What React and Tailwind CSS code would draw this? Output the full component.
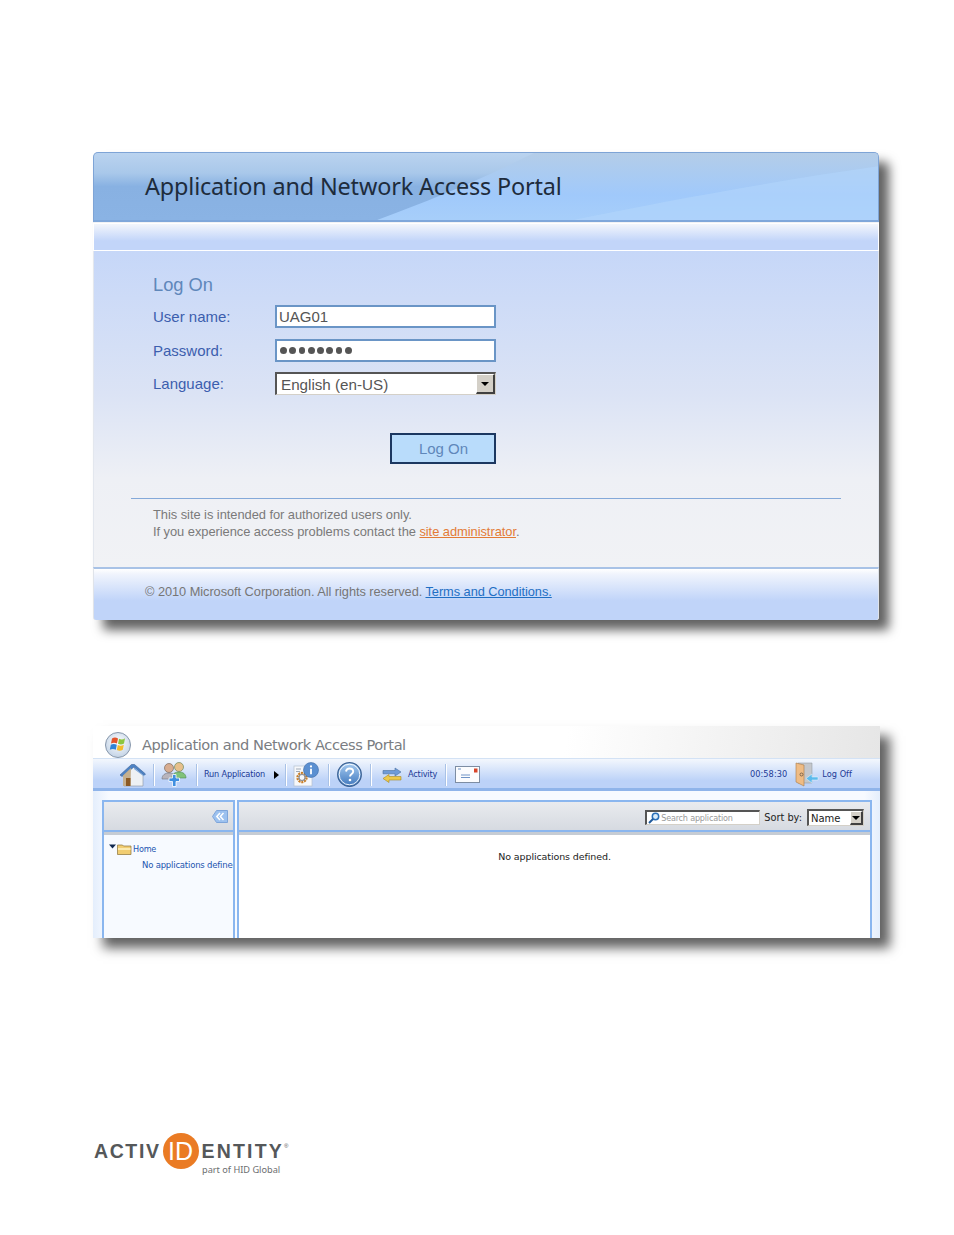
const Sep = ({ ml = "ml-0" }) => <div className={`h-[22px] w-px bg-[#a9c2e6] border-r border-white box-content ${ml}`} />;

const Orb = () => (
  <svg width="28" height="28" viewBox="0 0 28 28" className="shrink-0">
    <defs>
      <radialGradient id="orb" cx="50%" cy="40%" r="60%"><stop offset="0" stopColor="#ffffff" /><stop offset="1" stopColor="#c3d3e6" /></radialGradient>
    </defs>
    <circle cx="14" cy="14" r="12.5" fill="url(#orb)" stroke="#8797ab" />
    <path d="M8 7.500c2-1.200 4-1.200 6 0l-1 5c-2-1-4-1-6 0z" fill="#e2542b" />
    <path d="M15 7.700c2 1.100 4 1.100 6-.4l-1 5.200c-2 1.300-4 1.300-6 .2z" fill="#8cc63f" />
    <path d="M6.800 13.800c2-1 4-1 6 0l-1 5c-2-1-4-1-6 0z" fill="#2f83d6" />
    <path d="M13.800 14c2 1.100 4 1.100 6-.2l-1 5c-2 1.200-4 1.200-6 .1z" fill="#f3bb2b" />
  </svg>
);

const Home = () => (
  <svg width="27" height="24" viewBox="0 0 27 24" className="shrink-0">
    <path d="M5 11v12h19V11L14 3z" fill="#eef1f4" stroke="#8b95a3" strokeWidth=".6" />
    <path d="M1 12 12.500 1.500h3L26.500 11l-1.500 1.500-10-8.500L3 13.500z" fill="#4d82c4" stroke="#3a6296" strokeWidth=".6" />
    <path d="M4 12.500 12 5l-.5 18H4z" fill="#c5b08f" />
    <rect x="7" y="15" width="4.500" height="8" fill="#8c5a24" />
    <path d="M15 4.500 25 12.500v1L15 6z" fill="#7aa6dc" />
  </svg>
);

const Users = () => (
  <svg width="26" height="25" viewBox="0 0 26 25" className="shrink-0">
    <circle cx="8" cy="6" r="4.500" fill="#d8ad91" stroke="#7b6a5f" strokeWidth=".7" />
    <path d="M1 17c0-4 3-6 7-6s7 2 7 6z" fill="#b8b4bc" stroke="#6f7480" strokeWidth=".6" />
    <circle cx="18" cy="5" r="4.500" fill="#e7c08c" stroke="#6f8a5c" strokeWidth=".7" />
    <path d="M11 16c0-4 3-6 7-6s7 2 7 6z" fill="#7fc279" stroke="#4f8b50" strokeWidth=".6" />
    <path d="M11.500 12.500h3.500V16h3.500v3.500H15V24.500h-3.500V19.500H8V16h3.500z" fill="#3f8fe0" stroke="#fff" strokeWidth=".8" />
  </svg>
);

const GearInfo = () => (
  <svg width="27" height="25" viewBox="0 0 27 25" className="shrink-0">
    <rect x="1" y="4" width="18" height="20" fill="#f6f8fb" stroke="#b5c0cf" strokeWidth=".7" />
    <path d="M3 7h5M3 9.500h4" stroke="#9fa9b6" />
    <circle cx="9" cy="15.500" r="4.500" fill="none" stroke="#c9802b" strokeWidth="2.400" strokeDasharray="2 .8" />
    <circle cx="9" cy="15.500" r="3" fill="none" stroke="#8b8f96" strokeWidth="1.200" />
    <circle cx="18" cy="8" r="7.500" fill="#5a8fd1" stroke="#3c6aa5" strokeWidth=".6" />
    <path d="M18 6.800v5.500" stroke="#fff" strokeWidth="1.800" />
    <circle cx="18" cy="4.400" r="1.100" fill="#fff" />
  </svg>
);

const Help = () => (
  <svg width="25" height="25" viewBox="0 0 25 25" className="shrink-0">
    <defs>
      <linearGradient id="hp" x1="0" y1="0" x2="0" y2="1"><stop offset="0" stopColor="#a9cdf2" /><stop offset="1" stopColor="#3e77bd" /></linearGradient>
    </defs>
    <circle cx="12.500" cy="12.500" r="11.800" fill="url(#hp)" stroke="#385f91" strokeWidth="1.200" />
    <circle cx="12.500" cy="12.500" r="10.300" fill="none" stroke="#fff" strokeWidth=".9" />
    <path d="M9 9.500c.3-2 1.700-3 3.500-3 2.200 0 3.700 1.200 3.700 3 0 2.500-3.200 2.500-3.200 5" fill="none" stroke="#fff" strokeWidth="1.900" />
    <circle cx="13" cy="18" r="1.300" fill="#fff" />
  </svg>
);

const Arrows = () => (
  <svg width="20" height="16" viewBox="0 0 20 16" className="shrink-0">
    <path d="M1 3.500h12V1l6 4-6 4V6.800H1z" fill="#6f9bd8" stroke="#49709f" strokeWidth=".6" />
    <path d="M19 9.500H7V7.500L1 11.500l6 4v-2.500h12z" fill="#edc94a" stroke="#a88a22" strokeWidth=".6" />
  </svg>
);

const Envelope = () => (
  <svg width="25" height="17" viewBox="0 0 25 17" className="shrink-0">
    <rect x=".5" y=".5" width="24" height="16" fill="#fbfcfe" stroke="#7d8da3" />
    <rect x="19" y="2.500" width="3.500" height="4" fill="#d8442a" />
    <path d="M3 3h3M6 9h9M6 11.500h9" stroke="#6f93c6" strokeWidth="1" />
  </svg>
);

const Door = () => (
  <svg width="24" height="25" viewBox="0 0 24 25" className="shrink-0">
    <path d="M3 1h14v20H3z" fill="#c4c7cc" stroke="#8b9098" strokeWidth=".5" />
    <path d="M1 1 9 3v21L1 20z" fill="#efbc85" stroke="#a97b47" strokeWidth=".6" />
    <circle cx="6.500" cy="12.500" r="1.500" fill="none" stroke="#57493a" strokeWidth=".7" />
    <path d="M23 15h-6v-3l-6 4.500 6 4.500v-3h6z" fill="#5cbaec" stroke="#e8f6ff" strokeWidth=".5" />
  </svg>
);

const Folder = () => (
  <svg width="23" height="11" viewBox="0 0 23 11" className="shrink-0">
    <path d="M0 .5h7L3.500 4.500z" fill="#10284f" />
    <path d="M8.500 1h5l1 1h7.500v8.500h-13.500z" fill="#f1cd72" stroke="#8a7136" strokeWidth=".7" />
    <path d="M9 4h12.500v2H9z" fill="#fbeab0" />
  </svg>
);

const Collapse = () => (
  <svg width="16" height="13" viewBox="0 0 16 13" className="shrink-0">
    <path d="M4.500.5h11v12h-11L.5 6.500z" fill="#9cc1ef" stroke="#7ea5da" />
    <path d="M8 3 4.800 6.500 8 10M11.500 3 8.300 6.500l3.200 3.500" fill="none" stroke="#fff" strokeWidth="1.500" />
  </svg>
);

const Lens = () => (
  <svg width="12" height="12" viewBox="0 0 12 12" className="shrink-0">
    <circle cx="7.500" cy="4.500" r="3.200" fill="#d9ecfb" stroke="#2a6fb8" strokeWidth="1.500" />
    <path d="M5 7 1 11" stroke="#1f5a9c" strokeWidth="2" />
  </svg>
);

const DropArrow = ({ w = "w-[19px]" }) => (
  <div className={`${w} self-stretch bg-[#d4d0c8] border-t border-l border-white border-r-2 border-b-2 border-r-[#404040] border-b-[#404040] flex items-center justify-center`}>
    <div className="w-0 h-0 border-x-[4px] border-x-transparent border-t-[4px] border-t-black" />
  </div>
);

const Row = ({ label, children }) => (
  <div className="flex items-center h-[23px]">
    <div className="w-[122px] pt-[2px] text-[15px] text-[#3c5eae]">{label}</div>
    {children}
  </div>
);

function Portal() {
  return (
    <div className="w-[786px] h-[468px] flex flex-col rounded-t-[5px] rounded-b-[3px] shadow-[10px_10px_11px_rgba(0,0,0,0.62)] bg-[#f1f2f5]">
      <div className="relative h-[70px] overflow-hidden rounded-t-[5px] border-t border-x border-[#7ea4d6] border-b-2 border-b-[#7fa7da] bg-[linear-gradient(#bad3ef,#a9c8ea_30%,#88b1e2_50%,#8ab3e4)]">
        <svg className="absolute inset-0" width="786" height="70" viewBox="0 0 786 70">
          <defs>
            <linearGradient id="sw" x1="0" y1="0" x2="0" y2="1"><stop offset="0" stopColor="#b4cde8" /><stop offset=".6" stopColor="#a0c9fb" /><stop offset="1" stopColor="#a8cffa" /></linearGradient>
          </defs>
          <path d="M275 70C330 50 390 25 440 0H786V70z" fill="url(#sw)" />
          <path d="M465 70C560 50 680 28 786 13V70z" fill="#b3d5fb" opacity=".6" />
        </svg>
        <div className="relative pl-[51px] pt-[17px] text-[23.400px] leading-[33px] text-[#1e2c3c] font-['Noto_Sans',sans-serif] tracking-[-0.15px]">Application and Network Access Portal</div>
      </div>
      <div className="h-[28px] mt-px border border-white bg-[linear-gradient(#f3f6fc,#c2d5f9_65%)]" />
      <div className="flex-1 flex flex-col bg-[linear-gradient(#c6d7f8,#dbe3f5_45%,#eef0f5_72%,#f1f2f5)] border-x border-[#e3e7ee]">
        <div className="pl-[59px] pt-[22px]">
          <div className="text-[18.300px] leading-[24px] text-[#5f87ba]">Log On</div>
          <div className="mt-[8px] flex flex-col gap-[11px]">
            <Row label="User name:">
              <div className="w-[221px] h-[23px] bg-white border-2 border-[#6a95c6] pl-[2px] text-[15px] leading-[19px] text-[#555]">UAG01</div>
            </Row>
            <Row label="Password:">
              <div className="w-[221px] h-[23px] bg-white border-2 border-[#6a95c6] pl-[3px] flex items-center gap-[2.600px]">
                {[0, 1, 2, 3, 4, 5, 6, 7].map((i) => <div key={i} className="w-[6.700px] h-[6.700px] rounded-full bg-[#555]" />)}
              </div>
            </Row>
            <div className="mt-[-1px]">
              <Row label="Language:">
                <div className="w-[221px] h-[23px] bg-white border-t-2 border-l-2 border-[#555] border-b border-r border-b-[#d4d0c8] border-r-[#d4d0c8] flex items-center pl-[4px] justify-between">
                  <span className="text-[15.200px] leading-[19px] text-[#555]">English (en-US)</span>
                  <DropArrow />
                </div>
              </Row>
            </div>
          </div>
          <div className="mt-[38px] ml-[237px] w-[106px] h-[31px] pt-[2px] pl-px bg-[#b9dcfb] border-2 border-[#1b3760] flex items-center justify-center text-[15px] text-[#5f87ba]">Log On</div>
        </div>
        <div className="mt-[34px] mx-[37px] h-px bg-[#84a9d9]" />
        <div className="pl-[59px] pt-[8px] text-[12.900px] leading-[16.500px] text-[#7a7a7a] tracking-[-0.05px]">
          <div>This site is intended for authorized users only.</div>
          <div>If you experience access problems contact the <span className="text-[#e37b35] underline">site administrator</span>.</div>
        </div>
      </div>
      <div className="h-[53px] border-t-2 border-t-[#a8c2e6] border-x border-x-[#dfe3ea] rounded-b-[3px] bg-[linear-gradient(#ffffff,#f0f4fd_10%,#c0d4f9_62%)] pl-[51px] pt-[15px] text-[12.800px] leading-[16px] text-[#767676] tracking-[-0.05px]">
        © 2010 Microsoft Corporation. All rights reserved. <span className="text-[#1f6fc4] underline">Terms and Conditions.</span>
      </div>
    </div>
  );
}

function Toolbar() {
  const t = "font-['DejaVu_Sans',sans-serif] text-[8.200px] text-[#1c3a96] tracking-[-0.2px] whitespace-nowrap";
  const r = "font-['DejaVu_Sans',sans-serif] text-[8.200px] text-[#1c3a96] tracking-[0.05px] whitespace-nowrap";
  return (
    <div className="h-[33px] flex items-center border-t border-[#d3e2f5] border-b-[3px] border-b-[#8fb4ea] bg-[linear-gradient(#f3f7fd,#bcd2f8_75%)] pl-[26px] pt-[2px]">
      <Home />
      <Sep ml="ml-[7px]" />
      <div className="ml-[6px]"><Users /></div>
      <Sep ml="ml-[9px]" />
      <div className={`ml-[6px] ${t}`}>Run Application</div>
      <div className="ml-[9px] w-0 h-0 border-y-[4px] border-y-transparent border-l-[5px] border-l-black" />
      <Sep ml="ml-[6px]" />
      <div className="ml-[6px]"><GearInfo /></div>
      <Sep ml="ml-[8px]" />
      <div className="ml-[7px]"><Help /></div>
      <Sep ml="ml-[8px]" />
      <div className="ml-[10px]"><Arrows /></div>
      <div className={`ml-[6px] ${t}`}>Activity</div>
      <Sep ml="ml-[8px]" />
      <div className="ml-[8px]"><Envelope /></div>
      <div className={`ml-auto ${r}`}>00:58:30</div>
      <div className="ml-[8px]"><Door /></div>
      <div className={`ml-[3px] mr-[28px] ${r}`}>Log Off</div>
    </div>
  );
}

function PanelHead({ children, className = "" }) {
  return (
    <div className={`h-[30px] shrink-0 flex items-center border-b-[2px] border-b-[#8ab6ef] bg-[linear-gradient(#e9ebef,#d6dae1)] shadow-[0_3px_0_#c6ccd4] ${className}`}>
      {children}
    </div>
  );
}

function Console() {
  const small = "font-['DejaVu_Sans',sans-serif] text-[8.100px] tracking-[-0.2px] whitespace-nowrap";
  return (
    <div className="w-[787px] h-[212px] flex flex-col overflow-hidden shadow-[10px_10px_11px_rgba(0,0,0,0.62)] bg-[#f4f8ff]">
      <div className="h-[32px] shrink-0 flex items-center pl-[11px] pt-[5px] bg-[linear-gradient(100deg,#ffffff_60%,#e6e6e6)] ">
        <Orb />
        <div className="ml-[10px] font-['DejaVu_Sans',sans-serif] text-[14.600px] text-[#7a7d82] tracking-[-0.45px] whitespace-nowrap">Application and Network Access Portal</div>
      </div>
      <Toolbar />
      <div className="flex-1 flex gap-[2px] pl-[9px] pr-[8px] pt-[9px] bg-[linear-gradient(90deg,#e4eefc,#f7faff_2%,#f7faff_98%,#e4eefc)] min-h-0">
        <div className="w-[133px] flex flex-col border-x-2 border-t-2 border-[#8ab6ef] bg-[#f7faff] overflow-hidden">
          <PanelHead className="justify-end pr-[5px]"><Collapse /></PanelHead>
          <div className="pl-[5px] pt-[11px]">
            <div className="flex items-center gap-[1px]">
              <Folder />
              <span className={`${small} text-[#1c55b0]`}>Home</span>
            </div>
            <div className="mt-[4px] ml-[33px] font-['DejaVu_Sans',sans-serif] text-[8.500px] tracking-[-0.2px] whitespace-nowrap text-[#1c55b0]">No applications defined</div>
          </div>
        </div>
        <div className="flex-1 flex flex-col border-x-2 border-t-2 border-[#8ab6ef] bg-white overflow-hidden">
          <PanelHead className="justify-end pr-[6px] pt-[3px]">
            <div className="w-[115px] h-[15px] bg-white border-t-2 border-l-2 border-[#555] border-b border-r border-b-[#d4d0c8] border-r-[#d4d0c8] flex items-center pl-px gap-px">
              <Lens />
              <span className={`${small} text-[#9a9a9a]`}>Search application</span>
            </div>
            <div className={`ml-[4px] mt-[2px] font-['DejaVu_Sans',sans-serif] text-[9.800px] text-[#222] whitespace-nowrap`}>Sort by:</div>
            <div className="ml-[5px] w-[57px] h-[17px] bg-white border-t-2 border-l-2 border-[#555] border-b border-r border-b-[#d4d0c8] border-r-[#d4d0c8] flex items-center justify-between pl-[2px]">
              <span className="font-['DejaVu_Sans',sans-serif] text-[10px] text-[#222]">Name</span>
              <DropArrow w="w-[13px]" />
            </div>
          </PanelHead>
          <div className="pt-[18px] text-center font-['DejaVu_Sans',sans-serif] text-[9.500px] tracking-[-0.1px] text-[#222]">No applications defined.</div>
        </div>
      </div>
    </div>
  );
}

function Logo() {
  const t = "font-['Liberation_Sans',sans-serif] font-bold text-[19.500px] leading-[36px] text-[#55585a]";
  return (
    <div className="w-[198px] ml-px">
      <div className="flex items-center h-[36px]">
        <span className={`${t} tracking-[1.600px]`}>ACTIV</span>
        <div className="ml-[2px] w-[36px] h-[36px] rounded-full bg-[#ea7b24] flex items-center justify-center font-['Liberation_Sans',sans-serif] text-[25px] leading-none text-white shrink-0">ID</div>
        <span className={`${t} tracking-[2.200px] ml-[3px]`}>ENTITY</span>
        <span className="text-[6px] text-[#55585a] self-start mt-[9px]">®</span>
      </div>
      <div className="ml-[108px] mt-[-5px] font-['Noto_Sans',sans-serif] text-[9.200px] leading-[12px] text-[#6c6e70] whitespace-nowrap">part of HID Global</div>
    </div>
  );
}

export default function App() {
  return (
    <div className="w-[954px] h-[1235px] bg-white pl-[93px] pt-[152px] overflow-hidden font-['Liberation_Sans',sans-serif]">
      <Portal />
      <div className="mt-[106px]"><Console /></div>
      <div className="mt-[195px]"><Logo /></div>
    </div>
  );
}
